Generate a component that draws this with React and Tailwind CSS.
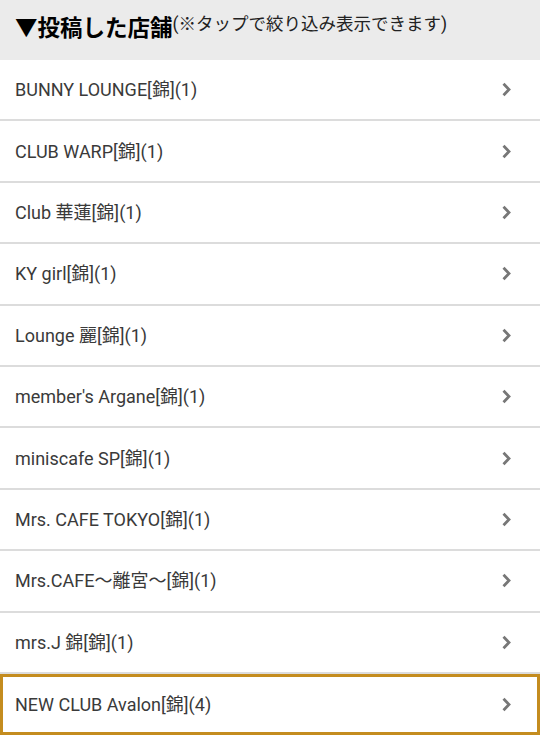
import React from 'react';

const shops = [
  'BUNNY LOUNGE[錦](1)',
  'CLUB WARP[錦](1)',
  'Club 華蓮[錦](1)',
  'KY girl[錦](1)',
  'Lounge 麗[錦](1)',
  "member's Argane[錦](1)",
  'miniscafe SP[錦](1)',
  'Mrs. CAFE TOKYO[錦](1)',
  'Mrs.CAFE～離宮～[錦](1)',
  'mrs.J 錦[錦](1)',
  'NEW CLUB Avalon[錦](4)',
];

const Chevron = () => (
  <svg width="11" height="15" viewBox="0 0 11 15" className="shrink-0">
    <path d="M2.5 1.8 L8 7.5 L2.5 13.2" fill="none" stroke="#777777" strokeWidth="2.8" />
  </svg>
);

const App = () => {
  return (
    <div className="w-[540px] h-[736px] overflow-hidden bg-white" style={{ fontFamily: 'Roboto, "Noto Sans CJK JP", sans-serif' }}>
      <div className="h-[60px] bg-[#ebebeb] flex items-center pl-[15px] pb-[4px]">
        <span className="text-[22.5px] font-bold text-black leading-none">▼投稿した店舗</span>
        <span className="text-[17.5px] text-[#222] leading-none -mt-[6px]">(※タップで絞り込み表示できます)</span>
      </div>
      <ul>
        {shops.map((name, i) => {
          const last = i === shops.length - 1;
          return (
            <li
              key={i}
              className={
                last
                  ? 'h-[61.4px] flex items-center justify-between pl-[12px] pr-[25px] text-[18px] text-[#3a3a3a] border-[3px] border-[#c48c1f]'
                  : 'h-[61.4px] flex items-center justify-between pl-[15px] pr-[28px] text-[18px] text-[#3a3a3a] border-b-2 border-[#dcdcdc]'
              }
            >
              <span>{name}</span>
              <Chevron />
            </li>
          );
        })}
      </ul>
    </div>
  );
};

export default App;
